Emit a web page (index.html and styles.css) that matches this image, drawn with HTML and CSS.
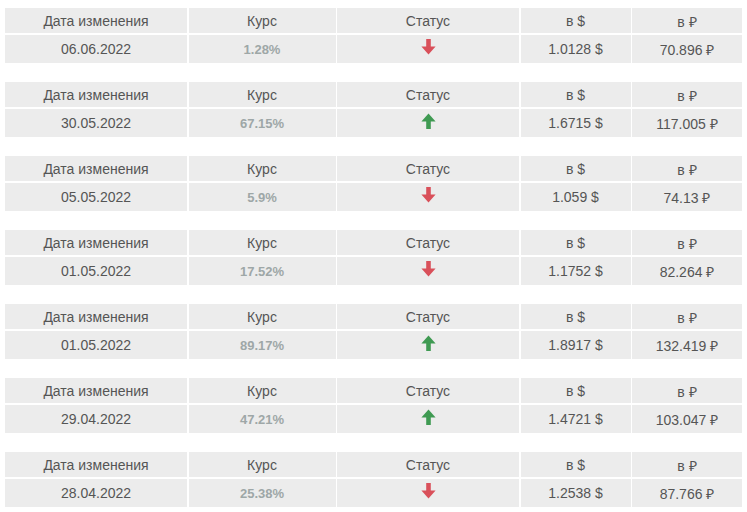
FILE: index.html
```html
<!DOCTYPE html>
<html lang="ru">
<head>
<meta charset="utf-8">
<link rel="stylesheet" href="styles.css">
</head>
<body>
<div class="list">
  <div class="tbl">
    <div class="h">Дата изменения</div><div class="h">Курс</div><div class="h">Статус</div><div class="h">в $</div><div class="h">в ₽</div>
    <div class="c">06.06.2022</div><div class="c pct">1.28%</div><div class="c"><svg class="arr down" viewBox="0 0 14 14"><path d="M5 0h4v6.5h4.2L7 13.5 0.8 6.5H5z"/></svg></div><div class="c">1.0128 $</div><div class="c">70.896 ₽</div>
  </div>
  <div class="tbl">
    <div class="h">Дата изменения</div><div class="h">Курс</div><div class="h">Статус</div><div class="h">в $</div><div class="h">в ₽</div>
    <div class="c">30.05.2022</div><div class="c pct">67.15%</div><div class="c"><svg class="arr up" viewBox="0 0 14 14"><path d="M5 14h4V7.5h4.2L7 0.5 0.8 7.5H5z"/></svg></div><div class="c">1.6715 $</div><div class="c">117.005 ₽</div>
  </div>
  <div class="tbl">
    <div class="h">Дата изменения</div><div class="h">Курс</div><div class="h">Статус</div><div class="h">в $</div><div class="h">в ₽</div>
    <div class="c">05.05.2022</div><div class="c pct">5.9%</div><div class="c"><svg class="arr down" viewBox="0 0 14 14"><path d="M5 0h4v6.5h4.2L7 13.5 0.8 6.5H5z"/></svg></div><div class="c">1.059 $</div><div class="c">74.13 ₽</div>
  </div>
  <div class="tbl">
    <div class="h">Дата изменения</div><div class="h">Курс</div><div class="h">Статус</div><div class="h">в $</div><div class="h">в ₽</div>
    <div class="c">01.05.2022</div><div class="c pct">17.52%</div><div class="c"><svg class="arr down" viewBox="0 0 14 14"><path d="M5 0h4v6.5h4.2L7 13.5 0.8 6.5H5z"/></svg></div><div class="c">1.1752 $</div><div class="c">82.264 ₽</div>
  </div>
  <div class="tbl">
    <div class="h">Дата изменения</div><div class="h">Курс</div><div class="h">Статус</div><div class="h">в $</div><div class="h">в ₽</div>
    <div class="c">01.05.2022</div><div class="c pct">89.17%</div><div class="c"><svg class="arr up" viewBox="0 0 14 14"><path d="M5 14h4V7.5h4.2L7 0.5 0.8 7.5H5z"/></svg></div><div class="c">1.8917 $</div><div class="c">132.419 ₽</div>
  </div>
  <div class="tbl">
    <div class="h">Дата изменения</div><div class="h">Курс</div><div class="h">Статус</div><div class="h">в $</div><div class="h">в ₽</div>
    <div class="c">29.04.2022</div><div class="c pct">47.21%</div><div class="c"><svg class="arr up" viewBox="0 0 14 14"><path d="M5 14h4V7.5h4.2L7 0.5 0.8 7.5H5z"/></svg></div><div class="c">1.4721 $</div><div class="c">103.047 ₽</div>
  </div>
  <div class="tbl">
    <div class="h">Дата изменения</div><div class="h">Курс</div><div class="h">Статус</div><div class="h">в $</div><div class="h">в ₽</div>
    <div class="c">28.04.2022</div><div class="c pct">25.38%</div><div class="c"><svg class="arr down" viewBox="0 0 14 14"><path d="M5 0h4v6.5h4.2L7 13.5 0.8 6.5H5z"/></svg></div><div class="c">1.2538 $</div><div class="c">87.766 ₽</div>
  </div>
</div>
</body>
</html>
```
FILE: styles.css
```css
html, body {
  margin: 0;
  padding: 0;
  background: #ffffff;
}
body {
  font-family: "Liberation Sans", Arial, sans-serif;
  color: #555555;
}
.list {
  padding: 8px 5px 0 5px;
  display: flex;
  flex-direction: column;
  gap: 19px;
}
.tbl {
  width: 737px;
  display: grid;
  grid-template-columns: 182px 147px 182px 110px 110px;
  grid-template-rows: 25px 28px;
  column-gap: 1.5px;
  row-gap: 2px;
  background: #ffffff;
}
.h, .c {
  background: #ececec;
  display: flex;
  align-items: center;
  justify-content: center;
  font-size: 14px;
}
.h {
  padding-top: 1px;
}
.pct {
  font-weight: bold;
  font-size: 13px;
  color: #9ea7a7;
}
.arr {
  width: 17px;
  height: 16px;
  margin-bottom: 4px;
}
.down { fill: #d9505a; }
.up { fill: #3f9a52; }
```
